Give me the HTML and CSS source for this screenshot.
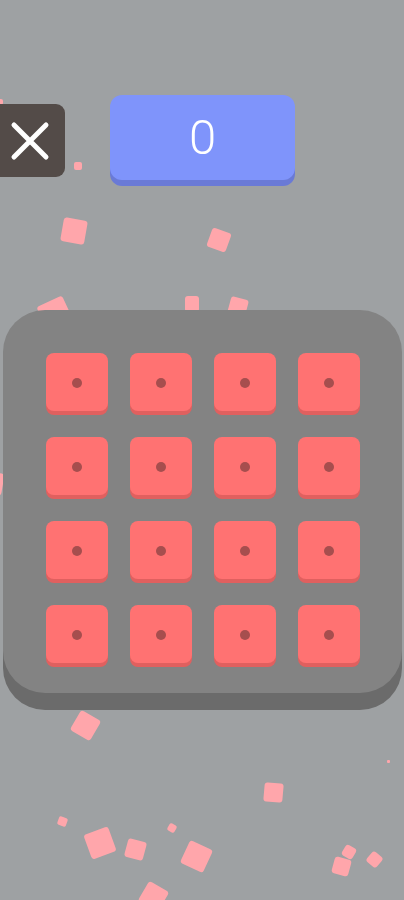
FILE: index.html
```html
<!DOCTYPE html>
<html lang="en">
<head>
<meta charset="utf-8">
<title>Tiles</title>
<link rel="stylesheet" href="styles.css">
</head>
<body>
<div class="screen">
  <div class="confetti">
    <span class="bit b1"></span><span class="bit b2"></span><span class="bit b3"></span><span class="bit b4"></span>
    <span class="bit b5"></span><span class="bit b6"></span><span class="bit b7"></span><span class="bit b8"></span>
    <span class="bit b9"></span><span class="bit b10"></span><span class="bit b11"></span><span class="bit b12"></span>
    <span class="bit b13"></span><span class="bit b14"></span><span class="bit b15"></span><span class="bit b16"></span>
    <span class="bit b17"></span><span class="bit b18"></span><span class="bit b19"></span><span class="bit b20"></span>
  </div>
  <header class="topbar">
    <button class="close" aria-label="Close">
      <svg width="75" height="73" viewBox="0 0 75 73">
        <path d="M24 21 L56 53 M56 21 L24 53" stroke="#ffffff" stroke-width="5" stroke-linecap="round" fill="none"/>
      </svg>
    </button>
    <div class="score">0</div>
  </header>
  <main class="board">
    <div class="grid">
      <div class="tile"><i class="dot"></i></div>
      <div class="tile"><i class="dot"></i></div>
      <div class="tile"><i class="dot"></i></div>
      <div class="tile"><i class="dot"></i></div>
      <div class="tile"><i class="dot"></i></div>
      <div class="tile"><i class="dot"></i></div>
      <div class="tile"><i class="dot"></i></div>
      <div class="tile"><i class="dot"></i></div>
      <div class="tile"><i class="dot"></i></div>
      <div class="tile"><i class="dot"></i></div>
      <div class="tile"><i class="dot"></i></div>
      <div class="tile"><i class="dot"></i></div>
      <div class="tile"><i class="dot"></i></div>
      <div class="tile"><i class="dot"></i></div>
      <div class="tile"><i class="dot"></i></div>
      <div class="tile"><i class="dot"></i></div>
    </div>
  </main>
</div>
</body>
</html>
```
FILE: styles.css
```css
* { box-sizing: border-box; }
html, body {
  margin: 0;
  padding: 0;
  background: #9ea1a3;
  font-family: Roboto, "Liberation Sans", sans-serif;
}
.screen {
  position: relative;
  width: 404px;
  height: 900px;
  overflow: hidden;
  background: #9ea1a3;
}
.confetti {
  position: absolute;
  inset: 0;
  z-index: 0;
}
.bit {
  position: absolute;
  display: block;
  background: #ffa6ab;
  border-radius: 3px;
}
.b1 { left: 62px; top: 219px; width: 24px; height: 24px; transform: rotate(10deg); }
.b2 { left: 209px; top: 230px; width: 20px; height: 20px; transform: rotate(20deg); }
.b3 { left: 41px; top: 300px; width: 28px; height: 28px; transform: rotate(-25deg); }
.b4 { left: 185px; top: 296px; width: 14px; height: 16px; }
.b5 { left: 229px; top: 298px; width: 18px; height: 18px; transform: rotate(15deg); }
.b6 { left: 74px; top: 162px; width: 8px; height: 8px; border-radius: 2px; }
.b7 { left: -3px; top: 99px; width: 6px; height: 6px; border-radius: 2px; }
.b8 { left: -19px; top: 472px; width: 22px; height: 22px; transform: rotate(10deg); }
.b9 { left: 74px; top: 714px; width: 23px; height: 23px; transform: rotate(30deg); }
.b10 { left: 264px; top: 783px; width: 19px; height: 19px; transform: rotate(5deg); }
.b11 { left: 387px; top: 760px; width: 3px; height: 3px; border-radius: 1px; }
.b12 { left: 58px; top: 817px; width: 9px; height: 9px; transform: rotate(20deg); border-radius: 2px; }
.b13 { left: 87px; top: 830px; width: 26px; height: 26px; transform: rotate(-20deg); }
.b14 { left: 126px; top: 840px; width: 19px; height: 19px; transform: rotate(15deg); }
.b15 { left: 168px; top: 824px; width: 8px; height: 8px; transform: rotate(30deg); border-radius: 2px; }
.b16 { left: 184px; top: 844px; width: 25px; height: 25px; transform: rotate(25deg); }
.b17 { left: 142px; top: 885px; width: 23px; height: 23px; transform: rotate(30deg); }
.b18 { left: 333px; top: 858px; width: 17px; height: 17px; transform: rotate(15deg); }
.b19 { left: 343px; top: 846px; width: 12px; height: 12px; transform: rotate(30deg); }
.b20 { left: 368px; top: 853px; width: 13px; height: 13px; transform: rotate(40deg); }

.topbar {
  position: relative;
  z-index: 1;
  display: flex;
  align-items: flex-start;
  gap: 45px;
  padding-top: 95px;
  margin-left: -10px;
}
.close {
  width: 75px;
  height: 73px;
  margin: 9px 0 0 0;
  padding: 0;
  border: 0;
  border-radius: 9px;
  background: #534b48;
  display: flex;
  align-items: center;
  justify-content: center;
}
.close svg { display: block; }
.score {
  width: 185px;
  height: 85px;
  border-radius: 12px;
  background: #7f94fb;
  box-shadow: 0 6px 0 #6a7ad6;
  color: #ffffff;
  font-family: Roboto, "Liberation Sans", sans-serif;
  font-weight: 300;
  font-size: 49px;
  line-height: 85px;
  text-align: center;
}
.board {
  position: relative;
  z-index: 1;
  margin: 130px 0 0 3px;
  width: 399px;
  height: 383px;
  border-radius: 42px;
  background: #838383;
  box-shadow: 0 17px 0 #6b6b6b;
  padding: 43px 0 0 43px;
}
.grid {
  display: grid;
  grid-template-columns: repeat(4, 62px);
  grid-auto-rows: 62px;
  gap: 22px;
}
.tile {
  height: 58px;
  border-radius: 8px;
  background: #ff7272;
  box-shadow: 0 4px 0 #e0605f;
  display: flex;
  align-items: center;
  justify-content: center;
}
.dot {
  display: block;
  width: 10px;
  height: 10px;
  border-radius: 50%;
  background: #a64e4e;
  margin-top: 2px;
}
```
